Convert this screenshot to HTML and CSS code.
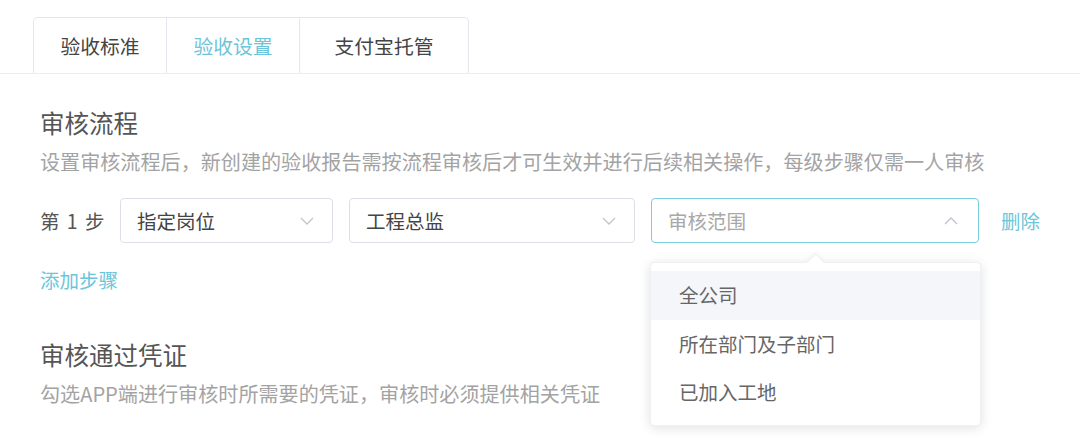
FILE: index.html
```html
<!DOCTYPE html>
<html lang="zh">
<head>
<meta charset="utf-8">
<link rel="stylesheet" href="styles.css">
</head>
<body>
<div class="page">
  <div class="tabbar">
    <div class="tabs">
      <div class="tab">验收标准</div>
      <div class="tab active">验收设置</div>
      <div class="tab">支付宝托管</div>
    </div>
  </div>

  <div class="content">
    <h2 class="title">审核流程</h2>
    <p class="desc">设置审核流程后，新创建的验收报告需按流程审核后才可生效并进行后续相关操作，每级步骤仅需一人审核</p>

    <div class="step-row">
      <span class="step-label">第 1 步</span>
      <div class="select s1">
        <span class="value">指定岗位</span>
        <svg class="chev" viewBox="0 0 14 8" width="14" height="8"><path d="M1 1 L7 7 L13 1" fill="none" stroke="#c0c4cc" stroke-width="1.3"/></svg>
      </div>
      <div class="select s2">
        <span class="value">工程总监</span>
        <svg class="chev" viewBox="0 0 14 8" width="14" height="8"><path d="M1 1 L7 7 L13 1" fill="none" stroke="#c0c4cc" stroke-width="1.3"/></svg>
      </div>
      <div class="select s3 focused">
        <span class="value placeholder">审核范围</span>
        <svg class="chev" viewBox="0 0 14 8" width="14" height="8"><path d="M1 7 L7 1 L13 7" fill="none" stroke="#c0c4cc" stroke-width="1.3"/></svg>
        <div class="dropdown">
          <span class="arrow"></span>
          <div class="option hover">全公司</div>
          <div class="option">所在部门及子部门</div>
          <div class="option">已加入工地</div>
        </div>
      </div>
      <a class="link del">删除</a>
    </div>

    <a class="link add">添加步骤</a>

    <h2 class="title title2">审核通过凭证</h2>
    <p class="desc">勾选APP端进行审核时所需要的凭证，审核时必须提供相关凭证</p>
  </div>
</div>
</body>
</html>
```

FILE: styles.css
```css
* { box-sizing: border-box; }
html, body { margin: 0; padding: 0; background: #fff; }
body {
  font-family: "Noto Sans CJK SC", "Noto Sans", sans-serif;
  color: #555;
  overflow: hidden;
}
.page { width: 1080px; height: 438px; }

.tabbar {
  margin-top: 17px;
  padding-left: 33px;
  border-bottom: 1px solid #ebedf2;
  display: flex;
}
.tabs {
  display: flex;
  border: 1px solid #e4e7ed;
  border-bottom: none;
  border-radius: 5px 5px 0 0;
}
.tab {
  height: 55px;
  display: flex;
  align-items: center;
  justify-content: center;
  font-size: 19.8px;
  color: #444;
  border-right: 1px solid #e4e7ed;
}
.tab:nth-child(1) { width: 133px; }
.tab:nth-child(2) { width: 133px; }
.tab:nth-child(3) { width: 168px; border-right: none; }
.tab.active { color: #6cc5d9; }

.content { padding-left: 40px; }
.title {
  margin: 31px 0 0;
  font-size: 24.5px;
  line-height: 36px;
  font-weight: normal;
  color: #555;
}
.title2 { margin-top: 43px; }
.desc {
  margin: 6px 0 0;
  font-size: 20.1px;
  line-height: 30px;
  color: #a3a3a3;
  white-space: nowrap;
}

.step-row {
  margin-top: 21px;
  display: flex;
  align-items: center;
  height: 45px;
}
.step-label {
  font-size: 19.5px;
  word-spacing: 3px;
  color: #555;
  width: 80px;
}
.select {
  position: relative;
  height: 45px;
  border: 1px solid #dcdfe6;
  border-radius: 4px;
  display: flex;
  align-items: center;
  justify-content: space-between;
  padding: 0 18px 0 16px;
  font-size: 19.5px;
  color: #444;
}
.s1 { width: 213px; }
.s2 { width: 286px; margin-left: 16px; }
.s3 { width: 328px; margin-left: 16px; }
.select.focused { border-color: #7ccddd; }
.value.placeholder { color: #a8a8a8; }
.chev { display: block; }
.s3 .chev { margin-right: 2px; }

.link {
  color: #6cc5d9;
  font-size: 19.5px;
  cursor: pointer;
}
.del { margin-left: 22px; }
.add {
  display: block;
  margin-top: 23px;
  line-height: 28px;
}

.dropdown {
  position: absolute;
  top: 63px;
  left: -2px;
  width: 331px;
  padding: 8px 0 8px;
  background: #fff;
  border-radius: 4px;
  box-shadow: 0 2px 12px rgba(0,0,0,0.12);
  border: 1px solid #eef0f3;
  z-index: 5;
}
.arrow {
  position: absolute;
  top: -7px;
  left: 158px;
  width: 13px;
  height: 13px;
  background: #fff;
  transform: rotate(45deg);
  border-top: 1px solid #eef0f3;
  border-left: 1px solid #eef0f3;
  box-shadow: -2px -2px 4px rgba(0,0,0,0.03);
}
.option {
  position: relative;
  height: 48.5px;
  line-height: 48.5px;
  padding-left: 28px;
  font-size: 19.5px;
  color: #666;
}
.option.hover { background: #f5f6fa; }
```
